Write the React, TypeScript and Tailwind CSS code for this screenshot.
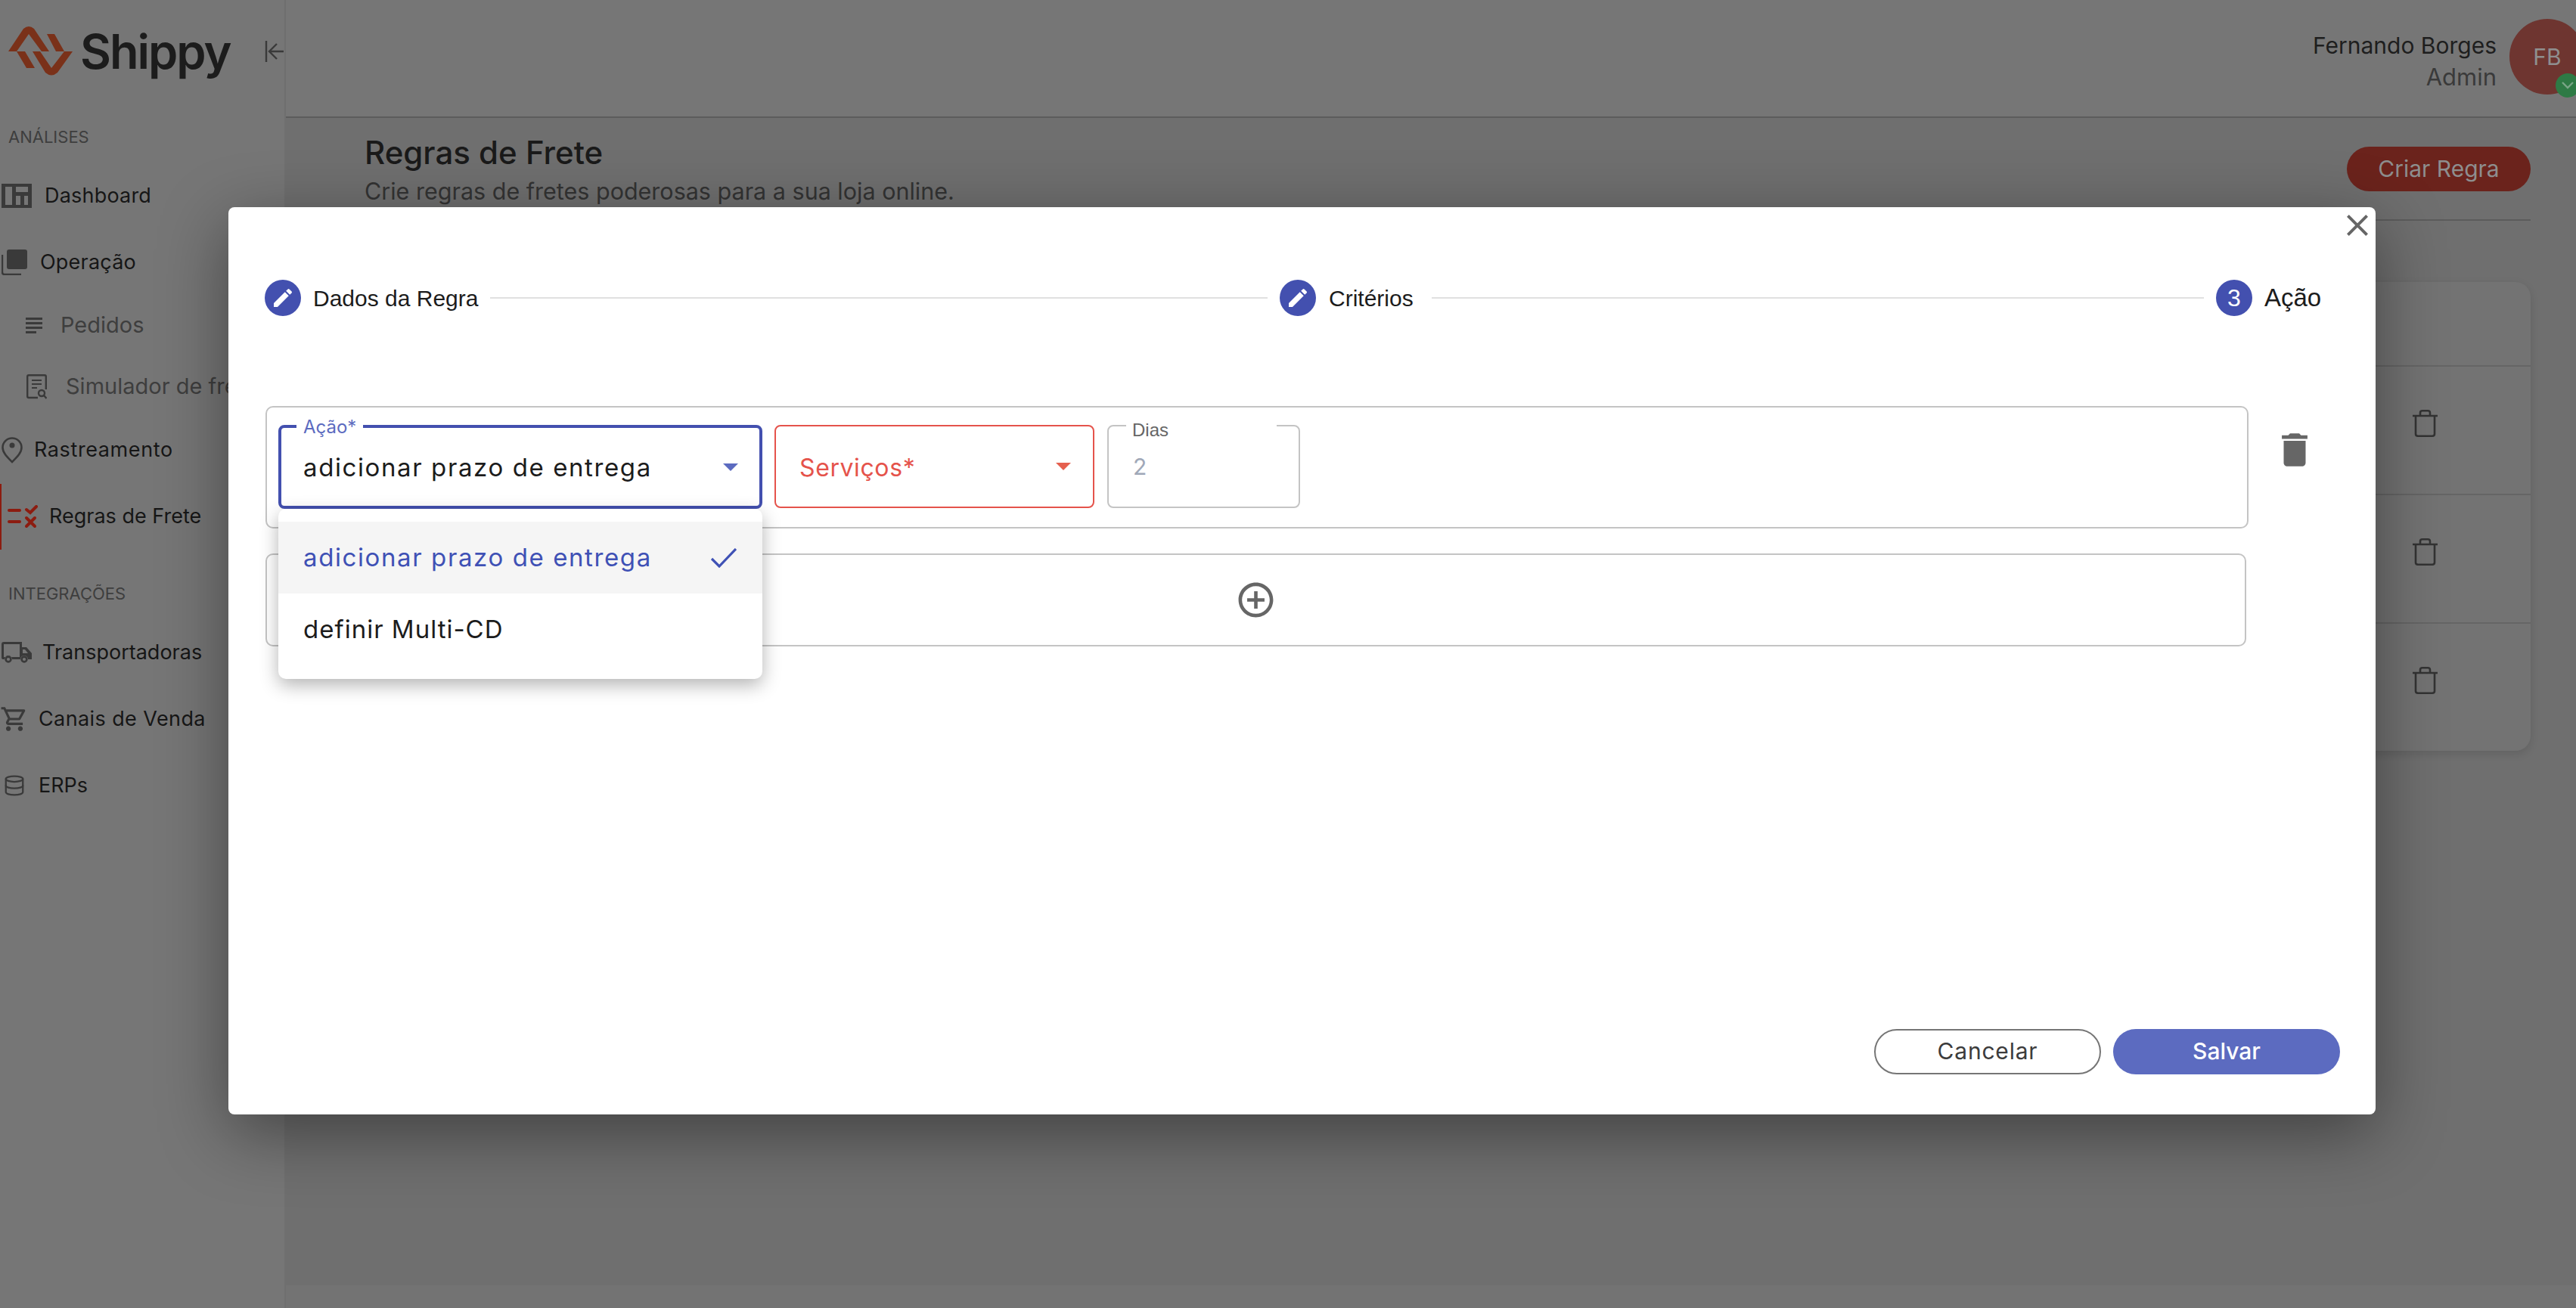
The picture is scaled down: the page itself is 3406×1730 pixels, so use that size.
import { MdOutlineShoppingCart } from 'react-icons/md';
import { Database } from 'lucide-react';

function Logo() {
  return (
    <svg width="88" height="70" viewBox="10 33 88 70" className="shrink-0">
      <path
        fill="#7a3119"
        d="M11 68 L31 38 Q38 32 45 38 L65 68 L55 68 L38 45 L22 68 Z M96 68 L76 96 Q68 103 60 96 L43 68 L53 68 L68 90 L85 68 Z M62 45 L72 45 L85 68 L74 68 Z M22 68 L33 68 L46 90 L35 90 Z"
      />
    </svg>
  );
}

function DashboardIcon() {
  return (
    <svg width="40" height="32" viewBox="0 0 40 32" className="shrink-0">
      <path
        fillRule="evenodd"
        fill="#3a3a3a"
        d="M0 0H40V32H0Z M5 4V28H14V4Z M19 4V11H35V4Z M19 16V28H25V16Z M30 16V28H35V16Z"
      />
    </svg>
  );
}

function OperacaoIcon() {
  return (
    <svg width="34" height="34" viewBox="0 0 34 34" className="shrink-0">
      <rect x="7" y="0" width="27" height="26" rx="3" fill="#3a3a3a" />
      <path d="M1 7V30Q1 33 4 33H26" fill="none" stroke="#3a3a3a" strokeWidth="2.4" />
    </svg>
  );
}

function NotesIcon() {
  return (
    <svg width="22" height="21" viewBox="0 0 22 21" className="shrink-0">
      <path d="M0 0H22V3H0Z M0 6H22V9H0Z M0 12H22V15H0Z M0 18H14V21H0Z" fill="#3a3a3a" />
    </svg>
  );
}

function SimuladorIcon() {
  return (
    <svg width="27" height="33" viewBox="0 0 27 33" className="shrink-0" fill="none" stroke="#3a3a3a">
      <path d="M15 31H3Q1.2 31 1.2 29V3Q1.2 1.2 3 1.2H24Q25.8 1.2 25.8 3V20" strokeWidth="2.4" />
      <path d="M7 8H20 M7 13H20 M7 18H14" strokeWidth="2.2" />
      <circle cx="20" cy="25" r="4" strokeWidth="2.4" />
      <path d="M23 28L26.5 32" strokeWidth="2.4" />
    </svg>
  );
}

function PinIcon() {
  return (
    <svg width="28" height="35" viewBox="0 0 28 35" className="shrink-0">
      <path
        d="M14 33C8 27 1.5 21 1.5 14A12.5 12.5 0 0 1 26.5 14C26.5 21 20 27 14 33Z"
        fill="none"
        stroke="#3a3a3a"
        strokeWidth="2.6"
      />
      <circle cx="14" cy="11" r="3.5" fill="#3a3a3a" />
    </svg>
  );
}

function RulesIcon() {
  return (
    <svg width="40" height="31" viewBox="0 0 40 31" className="shrink-0" fill="none" stroke="#8c1c10" strokeWidth="4" strokeLinecap="round">
      <path d="M2 7H16 M2 22H16" />
      <path d="M25 6L30 10L38 2" />
      <path d="M25 17L36 28 M36 17L25 28" />
    </svg>
  );
}

function TruckIcon() {
  return (
    <svg width="40" height="28" viewBox="0 0 40 28" className="shrink-0">
      <path
        fillRule="evenodd"
        fill="#3a3a3a"
        d="M3 0H27V7H33L40 15V23H35A5 5 0 0 0 25 23H14A5 5 0 0 0 4 23H2Q0 23 0 21V3Q0 0 3 0Z M3 3V20H5A6 6 0 0 1 13 20H24V3Z M28 10V15H35L31 10Z"
      />
      <circle cx="9" cy="23" r="3.4" fill="none" stroke="#3a3a3a" strokeWidth="2.6" />
      <circle cx="30" cy="23" r="3.4" fill="none" stroke="#3a3a3a" strokeWidth="2.6" />
    </svg>
  );
}

function TrashOutline() {
  return (
    <svg width="33" height="36" viewBox="0 0 33 36" fill="none" stroke="#333" strokeWidth="2.6">
      <path d="M0 8H33" />
      <path d="M10 8V4Q10 1.3 13 1.3H20Q23 1.3 23 4V8" />
      <path d="M4 8V32Q4 34.7 7 34.7H26Q29 34.7 29 32V8" />
    </svg>
  );
}

function Check() {
  return (
    <svg width="34" height="26" viewBox="0 0 34 26" fill="none" stroke="#3f51b5" strokeWidth="3.2" className="shrink-0">
      <path d="M1 14L11 24L33 1" />
    </svg>
  );
}

function PencilIcon() {
  return (
    <svg width="32" height="32" viewBox="0 0 24 24" fill="#fff">
      <path d="M3 17.25V21h3.75L17.81 9.94l-3.75-3.75L3 17.25zM20.71 7.04c.39-.39.39-1.02 0-1.41l-2.34-2.34a.9959.9959 0 0 0-1.41 0l-1.83 1.83 3.75 3.75 1.83-1.83z" />
    </svg>
  );
}

function StepCircle({ children }: { children: React.ReactNode }) {
  return (
    <div className="flex h-[48px] w-[48px] shrink-0 items-center justify-center rounded-full bg-[#4350af] text-[32px] text-white">
      {children}
    </div>
  );
}

function Arrow({ color }: { color: string }) {
  return (
    <svg width="20" height="10" viewBox="0 0 20 10" className="shrink-0" fill={color}>
      <path d="M0 0H20L10 10Z" />
    </svg>
  );
}

function SideRow({ icon, label, className, textClass }: { icon: React.ReactNode; label: string; className: string; textClass: string }) {
  return (
    <div className={`flex h-[60px] items-center whitespace-nowrap ${className}`}>
      {icon}
      <span className={textClass}>{label}</span>
    </div>
  );
}

function TableRow() {
  return (
    <div className="flex h-[170px] justify-end border-t-2 border-[#656565] pr-[123px] pt-[57px]">
      <div>
        <TrashOutline />
      </div>
    </div>
  );
}

export default function App() {
  return (
    <div className="relative flex h-[1730px] w-[3406px] overflow-hidden bg-[#6f6f6f] font-['Inter',sans-serif]">
      {/* sidebar */}
      <aside className="flex w-[378px] shrink-0 flex-col border-r-2 border-[#6f6f6f] bg-[#767676]">
        <div className="flex h-[136px] items-center pl-[10px]">
          <Logo />
          <span className="ml-[8px] w-[205px] text-[63px] leading-none font-semibold tracking-[-2px] text-[#1c1c1c]">Shippy</span>
          <svg width="26" height="30" viewBox="0 0 26 30" fill="none" stroke="#3a3a3a" strokeWidth="2.4" className="ml-[40px] shrink-0">
            <path d="M2 1V29 M25 15H7 M16 5L6 15L16 25" />
          </svg>
        </div>
        <SideRow icon={null} label="ANÁLISES" className="mt-[15px] pl-[11px]" textClass="text-[22px] text-[#3e3e3e]" />
        <SideRow icon={<DashboardIcon />} label="Dashboard" className="mt-[18px] pl-[2px]" textClass="ml-[17px] text-[27px] tracking-[0.2px] text-[#161616]" />
        <SideRow icon={<OperacaoIcon />} label="Operação" className="mt-[28px] pl-[2px]" textClass="ml-[17px] text-[27px] tracking-[0.2px] text-[#161616]" />
        <SideRow icon={<NotesIcon />} label="Pedidos" className="mt-[23px] pl-[34px]" textClass="ml-[24px] text-[29px] text-[#3e3e3e]" />
        <SideRow icon={<SimuladorIcon />} label="Simulador de frete" className="mt-[21px] pl-[35px]" textClass="ml-[25px] text-[29px] text-[#3e3e3e]" />
        <SideRow icon={<PinIcon />} label="Rastreamento" className="mt-[24px] pl-[2px]" textClass="ml-[15px] text-[27px] tracking-[0.6px] text-[#161616]" />
        <div className="mt-[15px] flex h-[87px] items-center border-l-2 border-[#8c1c10] pl-[8px] whitespace-nowrap">
          <RulesIcon />
          <span className="ml-[15px] text-[27px] text-[#161616]">Regras de Frete</span>
        </div>
        <SideRow icon={null} label="INTEGRAÇÕES" className="mt-[28px] pl-[11px]" textClass="text-[22px] text-[#3e3e3e]" />
        <SideRow icon={<TruckIcon />} label="Transportadoras" className="mt-[18px] pl-[2px]" textClass="ml-[14px] text-[27px] text-[#161616]" />
        <SideRow icon={<MdOutlineShoppingCart size={38} color="#3a3a3a" className="-ml-[2px] shrink-0" />} label="Canais de Venda" className="mt-[28px] pl-[2px]" textClass="ml-[13px] text-[27px] tracking-[0.4px] text-[#161616]" />
        <SideRow icon={<Database size={30} color="#3a3a3a" strokeWidth={1.8} className="shrink-0" />} label="ERPs" className="mt-[28px] pl-[4px]" textClass="ml-[17px] text-[27px] text-[#161616]" />
      </aside>

      {/* page behind the modal */}
      <main className="flex min-w-0 flex-1 flex-col">
        <header className="flex h-[156px] shrink-0 items-start justify-end border-b-2 border-[#5c5c5c] bg-[#767676]">
          <div className="mt-[40px] flex flex-col items-end">
            <span className="text-[30px] leading-[40px] text-[#1e1e1e]">Fernando Borges</span>
            <span className="mt-[2px] text-[31px] leading-[40px] text-[#3a3a3a]">Admin</span>
          </div>
          <div className="relative mt-[25px] mr-[-12px] ml-[17px] flex h-[100px] w-[100px] shrink-0 items-center justify-center rounded-full bg-[#6e3530] text-[30px] text-[#8f8f8f]">
            FB
            <div className="absolute top-[72px] left-[61px] flex h-[32px] w-[32px] items-center justify-center rounded-full bg-[#2e7a45]">
              <svg width="18" height="12" viewBox="0 0 18 12" fill="none" stroke="#7aa587" strokeWidth="2.4">
                <path d="M2 2L9 9L16 2" />
              </svg>
            </div>
          </div>
        </header>

        <div className="flex flex-1 flex-col pr-[60px] pl-[104px]">
          <div className="flex h-[136px] shrink-0 justify-between border-b-2 border-[#5c5c5c]">
            <div className="pt-[21px]">
              <h1 className="text-[42px] leading-[50px] font-medium text-[#1a1a1a]">Regras de Frete</h1>
              <p className="mt-[1px] text-[30.5px] leading-[50px] text-[#333]">Crie regras de fretes poderosas para a sua loja online.</p>
            </div>
            <div className="mt-[38px] flex h-[59px] w-[243px] items-center justify-center rounded-full bg-[#6b231c] text-[30px] text-[#8e8e8e]">
              Criar Regra
            </div>
          </div>
          <div className="mt-[81px] h-[620px] rounded-[20px] bg-[#737373] shadow-[0_4px_12px_rgba(0,0,0,0.12)]">
            <div className="h-[110px]" />
            <TableRow />
            <TableRow />
            <TableRow />
          </div>
        </div>
        <div className="h-[30px] shrink-0 bg-[#737373]" />
      </main>

      {/* modal */}
      <div className="absolute top-[274px] left-[302px] flex h-[1200px] w-[2839px] flex-col rounded-[8px] bg-white pt-[96px] shadow-[0_24px_90px_rgba(0,0,0,0.42)]">
        <svg width="48" height="48" viewBox="0 0 24 24" fill="#666" className="absolute top-0 right-0">
          <path d="M19 6.41 17.59 5 12 10.59 6.41 5 5 6.41 10.59 12 5 17.59 6.41 19 12 13.41 17.59 19 19 17.59 13.41 12z" />
        </svg>

        {/* stepper */}
        <div className="flex h-[48px] items-center pl-[48px] font-['Liberation_Sans',sans-serif]">
          <StepCircle><PencilIcon /></StepCircle>
          <span className="ml-[16px] w-[216px] text-[30px] whitespace-nowrap text-[#1c1c1c]">Dados da Regra</span>
          <div className="mr-[16px] ml-[18px] h-[2px] w-[1028px] bg-[#e0e0e0]" />
          <StepCircle><PencilIcon /></StepCircle>
          <span className="ml-[17px] w-[111px] text-[30px] whitespace-nowrap text-[#1c1c1c]">Critérios</span>
          <div className="mr-[16px] ml-[25px] h-[2px] w-[1021px] bg-[#e0e0e0]" />
          <StepCircle>3</StepCircle>
          <span className="ml-[16px] text-[33px] whitespace-nowrap text-[#1c1c1c]">Ação</span>
        </div>

        {/* action row */}
        <div className="mt-[119px] flex pl-[49px]">
          <div className="flex h-[162px] w-[2622px] gap-[16px] rounded-[10px] border-2 border-[#c4c4c4] pt-[23px] pl-[15px]">
            <div className="relative flex h-[111px] w-[640px] items-center justify-between rounded-[8px] border-4 border-[#4350af] pr-[28px] pl-[29px]">
              <span className="absolute top-[-13px] left-[20px] bg-white px-[9px] text-[24px] leading-[24px] text-[#5c6bc0]">Ação*</span>
              <span className="mt-[2px] text-[33px] tracking-[1.6px] text-[#1c1c1c]">adicionar prazo de entrega</span>
              <Arrow color="#5c6bc0" />
            </div>
            <div className="flex h-[110px] w-[423px] items-center justify-between rounded-[8px] border-2 border-[#e5534b] pr-[29px] pl-[31px]">
              <span className="mt-[4px] text-[32px] tracking-[0.6px] text-[#e5534b]">Serviços*</span>
              <Arrow color="#e5604f" />
            </div>
            <div className="relative ml-[1px] flex h-[110px] w-[255px] items-center rounded-[8px] border-2 border-[#c4c4c4] pl-[32px]">
              <span className="absolute top-[-11px] left-[23px] w-[199px] bg-white pl-[8px] font-['Liberation_Sans',sans-serif] text-[24px] leading-[32px] text-[#666]">Dias</span>
              <span className="text-[30px] text-[#a0a8b8]">2</span>
            </div>
          </div>
          <svg width="58" height="58" viewBox="0 0 24 24" fill="#666" className="mt-[29px] ml-[32px] shrink-0">
            <path d="M6 19c0 1.1.9 2 2 2h8c1.1 0 2-.9 2-2V7H6v12zM19 4h-3.5l-1-1h-5l-1 1H5v2h14V4z" />
          </svg>
        </div>

        {/* add rule */}
        <div className="mt-[33px] ml-[49px] flex h-[123px] w-[2619px] items-center justify-center rounded-[10px] border-2 border-[#c4c4c4]">
          <svg width="55" height="55" viewBox="0 0 24 24" fill="#666">
            <path d="M13 7h-2v4H7v2h4v4h2v-4h4v-2h-4V7zm-1-5C6.48 2 2 6.48 2 12s4.48 10 10 10 10-4.48 10-10S17.52 2 12 2zm0 18c-4.41 0-8-3.59-8-8s3.59-8 8-8 8 3.59 8 8-3.59 8-8 8z" />
          </svg>
        </div>

        {/* footer buttons */}
        <div className="mt-auto flex justify-end gap-[16px] pr-[47px] pb-[53px]">
          <button className="h-[60px] w-[300px] rounded-full border-2 border-[#757575] pb-[2px] text-[30px] tracking-[0.8px] text-[#3c3c3c]">Cancelar</button>
          <button className="h-[60px] w-[300px] rounded-full bg-[#5c6bc0] pb-[2px] text-[30px] font-medium text-white">Salvar</button>
        </div>

        {/* open select menu */}
        <div className="absolute top-[399px] left-[66px] h-[225px] w-[640px] rounded-[10px] bg-white py-[17px] shadow-[0_8px_24px_rgba(0,0,0,0.3)]">
          <div className="flex h-[95px] items-center justify-between bg-[#f5f5f5] pr-[34px] pl-[33px] text-[33px] tracking-[1.6px] text-[#3f51b5]">
            adicionar prazo de entrega
            <Check />
          </div>
          <div className="flex h-[95px] items-center pl-[33px] text-[33px] tracking-[1px] text-[#1c1c1c]">definir Multi-CD</div>
        </div>
      </div>
    </div>
  );
}
